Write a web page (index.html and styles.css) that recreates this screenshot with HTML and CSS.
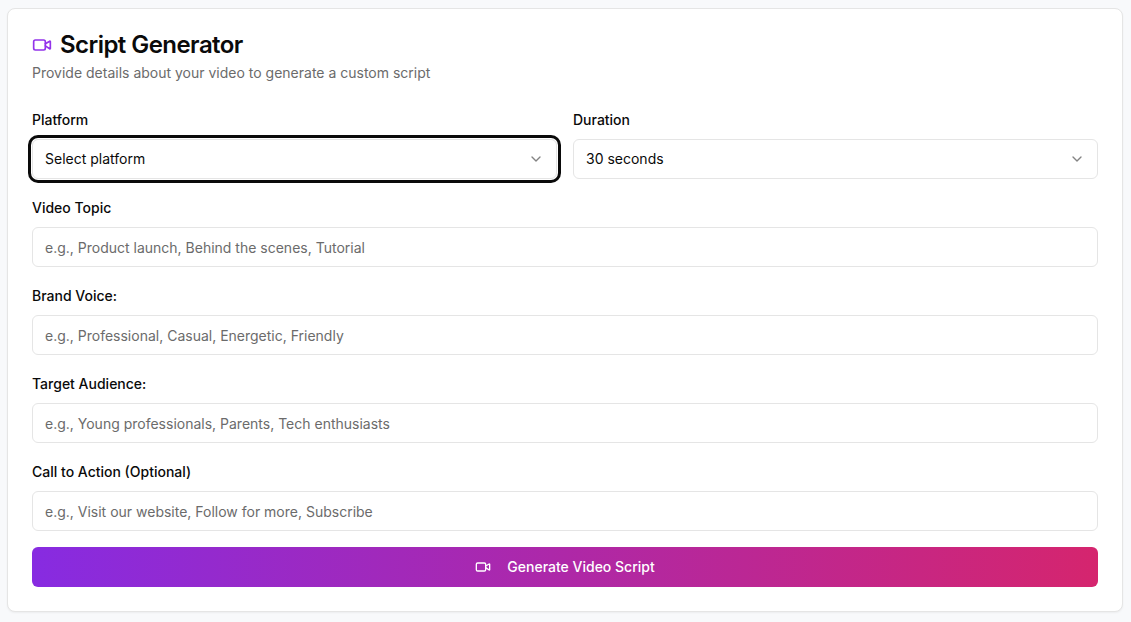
FILE: index.html
```html
<!DOCTYPE html>
<html lang="en">
<head>
<meta charset="utf-8">
<title>Script Generator</title>
<link rel="stylesheet" href="styles.css">
</head>
<body>
<main class="card">
  <header class="card-header">
    <h1 class="title">
      <svg class="icon icon-title" viewBox="0 0 24 24" fill="none" stroke="currentColor" stroke-width="2" stroke-linecap="round" stroke-linejoin="round"><path d="m16 13 5.223 3.482a.5.5 0 0 0 .777-.416V7.87a.5.5 0 0 0-.752-.432L16 10.5"/><rect x="2" y="6" width="14" height="12" rx="2"/></svg>
      Script Generator
    </h1>
    <p class="subtitle">Provide details about your video to generate a custom script</p>
  </header>
  <form class="form">
    <div class="row">
      <div class="field">
        <label class="label">Platform</label>
        <div class="control select focused"><span class="select-value">Select platform</span>
          <svg class="chevron" viewBox="0 0 24 24" fill="none" stroke="currentColor" stroke-width="2" stroke-linecap="round" stroke-linejoin="round"><path d="m6 9 6 6 6-6"/></svg>
        </div>
      </div>
      <div class="field">
        <label class="label">Duration</label>
        <div class="control select"><span class="select-value">30 seconds</span>
          <svg class="chevron" viewBox="0 0 24 24" fill="none" stroke="currentColor" stroke-width="2" stroke-linecap="round" stroke-linejoin="round"><path d="m6 9 6 6 6-6"/></svg>
        </div>
      </div>
    </div>
    <div class="field">
      <label class="label">Video Topic</label>
      <input class="control" placeholder="e.g., Product launch, Behind the scenes, Tutorial">
    </div>
    <div class="field">
      <label class="label">Brand Voice:</label>
      <input class="control" placeholder="e.g., Professional, Casual, Energetic, Friendly">
    </div>
    <div class="field">
      <label class="label">Target Audience:</label>
      <input class="control" placeholder="e.g., Young professionals, Parents, Tech enthusiasts">
    </div>
    <div class="field">
      <label class="label">Call to Action (Optional)</label>
      <input class="control" placeholder="e.g., Visit our website, Follow for more, Subscribe">
    </div>
    <button class="generate" type="button">
      <svg class="icon icon-button" viewBox="0 0 24 24" fill="none" stroke="currentColor" stroke-width="2" stroke-linecap="round" stroke-linejoin="round"><path d="m16 13 5.223 3.482a.5.5 0 0 0 .777-.416V7.87a.5.5 0 0 0-.752-.432L16 10.5"/><rect x="2" y="6" width="14" height="12" rx="2"/></svg>
      <span class="generate-text">Generate Video Script</span>
    </button>
  </form>
</main>
</body>
</html>
```
FILE: styles.css
```css
* { box-sizing: border-box; }
html, body { height: 100%; }
body {
  margin: 0;
  padding: 8px 8px 8px 7px;
  background: #f8f9fb;
  color: #0a0a0a;
  font-family: Inter, "Liberation Sans", sans-serif;
  font-size: 14px;
  overflow: hidden;
}
.card {
  width: 1116px;
  height: 604px;
  background: #fff;
  border: 1px solid #e5e5e5;
  border-radius: 8px;
  box-shadow: 0 1px 2px rgba(0,0,0,.05);
  padding: 24px;
}
.card-header { display: flex; flex-direction: column; gap: 6px; height: 74px; }
.title {
  margin: 0;
  display: flex;
  align-items: center;
  gap: 8px;
  font-size: 24px;
  line-height: 24px;
  font-weight: 600;
  letter-spacing: -0.55px;
}
.icon-title { width: 20px; height: 20px; color: #9333ea; flex: none; }
.subtitle { margin: 0; font-size: 14px; line-height: 20px; color: #6b6b6b; }
.form { display: flex; flex-direction: column; gap: 16px; }
.row { display: grid; grid-template-columns: 1fr 1fr; gap: 16px; }
.field { display: flex; flex-direction: column; padding-top: 4px; }
.label { font-size: 14px; line-height: 18px; font-weight: 500; margin-bottom: 10px; }
.control {
  display: block;
  width: 100%;
  height: 40px;
  padding: 0 12px;
  border: 1px solid #e5e5e5;
  border-radius: 6px;
  background: #fff;
  font: inherit;
  color: #0a0a0a;
  outline: none;
}
.control::placeholder { color: #6b6b6b; opacity: 1; }
.select { display: flex; align-items: center; justify-content: space-between; }
.select-value { line-height: 20px; padding-bottom: 1px; }
.focused { box-shadow: 0 0 0 1px #fff, 0 0 0 4px #0a0a0a; }
.chevron { width: 16px; height: 16px; color: #0a0a0a; opacity: .5; }
.generate {
  display: flex;
  align-items: center;
  justify-content: center;
  gap: 16px;
  height: 40px;
  border: 0;
  border-radius: 6px;
  background: linear-gradient(to right, #872be1, #d5256e);
  color: #fff;
  font: inherit;
  font-weight: 500;
}
.generate-text { line-height: 20px; padding-bottom: 1px; }
.icon-button { width: 16px; height: 16px; flex: none; }
```
